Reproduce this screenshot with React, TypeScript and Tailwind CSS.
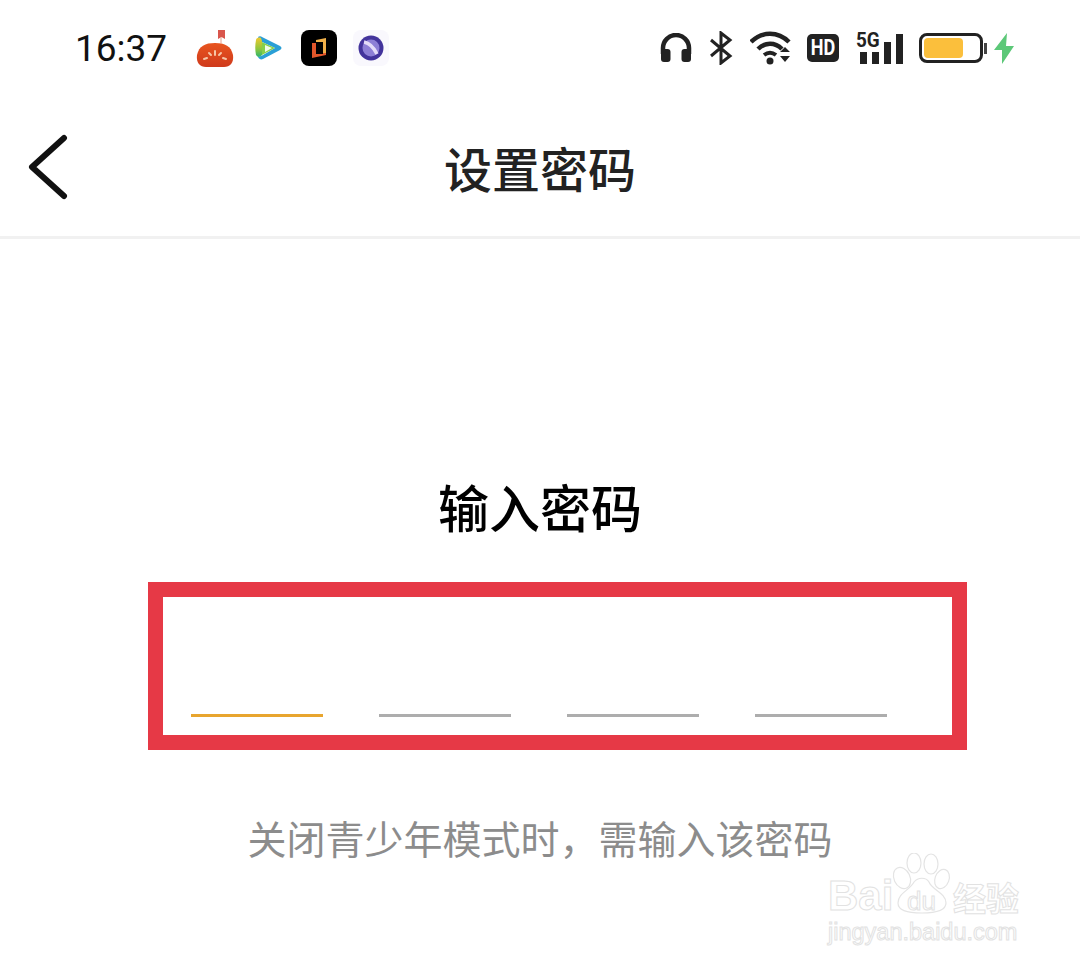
const CJK = "font-['Noto_Sans_CJK_SC','Noto_Sans',sans-serif]";

function TomatoIcon() {
  return (
    <svg width="40" height="40" viewBox="0 0 40 40">
      <defs>
        <linearGradient id="tomato" x1="0" y1="0" x2="0" y2="1">
          <stop offset="0" stopColor="#e8551f" />
          <stop offset="1" stopColor="#cf3a1c" />
        </linearGradient>
      </defs>
      <path d="M23 2h7v9l-3.500-2-3.500 2z" fill="#d9564c" />
      <path d="M26 9v6" stroke="#e9a08a" strokeWidth="1" />
      <path d="M20 15C10 15 4 18 2 27c-1 8 3 12 9 12h18c6 0 10-4 9-12-2-9-8-12-18-12z" fill="url(#tomato)" />
      <path d="M9 31l3-1M14 25l2 2M20 23v4M26 25l-2 2M31 31l-3-1" stroke="#f6c6a6" strokeWidth="2" strokeLinecap="round" />
    </svg>
  );
}

function VideoIcon() {
  return (
    <svg width="28" height="24" viewBox="0 0 28 24">
      <defs>
        <linearGradient id="videoLeft" x1="0" y1="0" x2="0" y2="1">
          <stop offset="0" stopColor="#f0c92e" />
          <stop offset="0.6" stopColor="#8cc63f" />
          <stop offset="1" stopColor="#2fb56e" />
        </linearGradient>
      </defs>
      <path d="M4 1c1-1 3-1 4 0l18 9c2 1 2 3 0 4L9 23c-2 1-4 0-5-2 3-1 5-2 5-2l12-7L6 5z" fill="#2a9fd6" />
      <path d="M2 4c0-2 3-3 5-2l1 3v14c-2 2-4 3-6 0-1-5-1-10 0-15z" fill="url(#videoLeft)" />
      <path d="M8 6l13 6-13 7z" fill="#86d04a" />
      <path d="M11 9l7 3-7 4z" fill="#f4fbe8" />
    </svg>
  );
}

function ReaderIcon() {
  return (
    <div className="flex h-9 w-9 items-center justify-center rounded-lg bg-black">
      <svg width="16" height="22" viewBox="0 0 16 22">
        <path d="M5 3l10-2v15h-3V5H5z" fill="#efb04a" />
        <path d="M1 6h4v11h7v-1h3v2L1 21z" fill="#e2572b" />
      </svg>
    </div>
  );
}

function PlanetIcon() {
  return (
    <div className="flex h-9 w-9 items-center justify-center rounded-lg bg-[#f9f8fd]">
      <svg width="26" height="26" viewBox="0 0 26 26">
        <circle cx="13" cy="13" r="12.500" fill="#43349c" />
        <circle cx="13" cy="13" r="8.500" fill="#8d7fd6" />
        <path d="M6 7c5 1 10 6 13 12" stroke="#e4dcf8" strokeWidth="3.500" fill="none" />
      </svg>
    </div>
  );
}

function LeftIcons() {
  return (
    <div className="ml-[28px] flex items-center">
      <TomatoIcon />
      <div className="ml-[19px]"><VideoIcon /></div>
      <div className="ml-[19px]"><ReaderIcon /></div>
      <div className="ml-[16px]"><PlanetIcon /></div>
    </div>
  );
}

function RightIcons() {
  return (
    <div className="flex items-center">
      <svg width="32" height="30" viewBox="0 0 32 30">
        <path d="M3 21v-6a13 13 0 0 1 26 0v6" fill="none" stroke="#222" strokeWidth="4.500" />
        <rect x="1" y="16" width="9.500" height="13" rx="3" fill="#222" />
        <rect x="21.500" y="16" width="9.500" height="13" rx="3" fill="#222" />
      </svg>
      <svg className="ml-[17px]" width="24" height="34" viewBox="0 0 24 34">
        <path d="M2 9l19 16-9 7V2l9 7L2 25" fill="none" stroke="#222" strokeWidth="3" />
      </svg>
      <svg className="ml-[17px]" width="46" height="34" viewBox="0 0 46 34">
        <path d="M1 11c11-11 27-11 38 0" fill="none" stroke="#222" strokeWidth="4.500" />
        <path d="M8 18c7-7 17-7 24 0" fill="none" stroke="#222" strokeWidth="4.500" />
        <path d="M14 24c4-3 8-3 12 0" fill="none" stroke="#222" strokeWidth="4" />
        <circle cx="20" cy="30" r="3.500" fill="#222" />
        <path d="M35 16l5 5H30zM30 25h10l-5 6z" fill="#222" />
      </svg>
      <div className="ml-[11px] flex h-[28px] w-[32px] items-center justify-center rounded-[5px] bg-[#222] font-['Roboto',sans-serif] text-[22px] leading-none font-bold text-white">
        <span className="scale-x-[0.82]">HD</span>
      </div>
      <div className="relative ml-[17px] h-[32px] w-[47px]">
        <span className="absolute top-[-2px] left-0 origin-left scale-x-[0.9] font-['Roboto',sans-serif] text-[21px] leading-[20px] font-bold text-[#222]">
          5G
        </span>
        <div className="flex h-full items-end gap-[5.500px] pl-[4px]">
          <div className="h-[12px] w-[6.500px] bg-[#222]" />
          <div className="h-[12px] w-[6.500px] bg-[#222]" />
          <div className="h-[22px] w-[6.500px] bg-[#222]" />
          <div className="h-[30px] w-[6.500px] bg-[#222]" />
        </div>
      </div>
      <div className="ml-[16px] flex items-center">
        <div className="h-[30px] w-[64px] rounded-[8px] border-[3px] border-[#222] p-[2px]">
          <div className="h-full w-[39px] rounded-[4px] bg-[#fbbf3c]" />
        </div>
        <div className="ml-[1px] h-[11px] w-[3px] bg-[#444]" />
      </div>
      <svg className="ml-[7px]" width="20" height="31" viewBox="0 0 20 31">
        <path d="M13 0L0 17h8v14l12-18h-8z" fill="#5cc878" />
      </svg>
    </div>
  );
}

function StatusBar() {
  return (
    <div className="flex h-[96px] items-center justify-between pr-[66px] pl-[75px]">
      <div className="flex items-center">
        <span className="font-['Roboto',sans-serif] text-[37px] leading-none text-[#111]">16:37</span>
        <LeftIcons />
      </div>
      <RightIcons />
    </div>
  );
}

function Header() {
  return (
    <div className="grid h-[143px] grid-cols-[1fr_auto_1fr] items-center border-b-[3px] border-[#f1f1f1] pt-[1px]">
      <svg className="ml-[28px]" width="40" height="66" viewBox="0 0 40 66">
        <path d="M36 4L4 33l32 29" fill="none" stroke="#111" strokeWidth="6" strokeLinecap="round" strokeLinejoin="round" />
      </svg>
      <h1 className="text-[48px] leading-none font-medium text-[#222]">设置密码</h1>
    </div>
  );
}

function PasswordBox() {
  const slots = [0, 1, 2, 3];
  return (
    <div className="mt-[46px] ml-[148px] flex h-[168px] w-[819px] items-end gap-[56px] border-[15px] border-[#e63946] pb-[18px] pl-[28px]">
      {slots.map((slot) => (
        <div key={slot} className={`h-[3px] w-[132px] ${slot === 0 ? 'bg-[#e8a52e]' : 'bg-[#adadad]'}`} />
      ))}
    </div>
  );
}

function Watermark() {
  const outline = "text-transparent [-webkit-text-stroke:1px_#e2e2e2]";
  return (
    <div className="absolute top-[850px] left-[828px] h-[100px] w-[200px]">
      <span className={`absolute top-[25px] left-0 font-['Liberation_Sans',sans-serif] text-[42px] leading-none font-bold ${outline}`}>
        Bai
      </span>
      <svg className="absolute top-[3px] left-[64px]" width="62" height="62" viewBox="0 0 62 62">
        <g fill="#fff" stroke="#e4e4e4" strokeWidth="1.200">
          <ellipse cx="10" cy="25" rx="8" ry="11" transform="rotate(-25 10 25)" />
          <ellipse cx="22" cy="10" rx="7" ry="10" />
          <ellipse cx="39" cy="11" rx="7" ry="10" />
          <ellipse cx="50" cy="26" rx="7" ry="10" transform="rotate(20 50 26)" />
          <path d="M6 50c0-10 12-13 16-21 4-5 12-5 15 0 3 8 17 11 17 21 0 7-8 10-24 10S6 57 6 50z" />
        </g>
      </svg>
      <span className={`absolute top-[38px] left-[79px] font-['Liberation_Sans',sans-serif] text-[26px] leading-none ${outline}`}>
        du
      </span>
      <span className={`absolute top-[31px] left-[125px] font-['Noto_Sans_CJK_SC',sans-serif] text-[33px] leading-none font-bold ${outline}`}>
        经验
      </span>
      <span className={`absolute top-[71px] left-0 font-['Liberation_Sans',sans-serif] text-[23.500px] leading-none ${outline}`}>
        jingyan.baidu.com
      </span>
    </div>
  );
}

export default function App() {
  return (
    <div className={`relative h-[968px] w-[1080px] overflow-hidden bg-white ${CJK}`}>
      <StatusBar />
      <Header />
      <main className="flex flex-col pt-[237px]">
        <h2 className="text-center text-[51px] leading-[60px] font-medium text-black">输入密码</h2>
        <PasswordBox />
        <p className="mt-[64px] text-center text-[39px] leading-[46px] text-[#8c8c8c]">
          {'关闭青少年模式时\uFF0C需输入该密码'}
        </p>
      </main>
      <Watermark />
    </div>
  );
}
